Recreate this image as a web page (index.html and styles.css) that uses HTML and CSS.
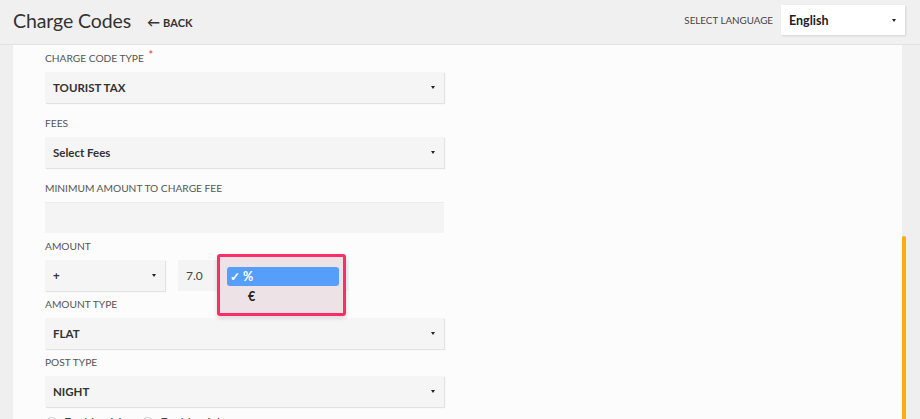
FILE: index.html
```html
<!DOCTYPE html>
<html>
<head>
<meta charset="utf-8">
<link rel="stylesheet" href="styles.css">
</head>
<body>
<div class="page">
  <header class="topbar">
    <div class="title-group">
      <h1 class="title">Charge Codes</h1>
      <a class="back"><span class="back-arrow">&#8592;</span> BACK</a>
    </div>
    <div class="lang">
      <span class="lang-label">SELECT LANGUAGE</span>
      <div class="lang-select"><span>English</span><i class="caret"></i></div>
    </div>
  </header>
  <div class="body">
    <div class="gutter"></div>
    <main class="card">
      <div class="group g-wide">
        <div class="label">CHARGE CODE TYPE <span class="req">*</span></div>
        <div class="select"><span>TOURIST TAX</span><i class="caret"></i></div>
      </div>
      <div class="group g-wide">
        <div class="label">FEES</div>
        <div class="select"><span>Select Fees</span><i class="caret"></i></div>
      </div>
      <div class="group">
        <div class="label">MINIMUM AMOUNT TO CHARGE FEE</div>
        <div class="input"></div>
      </div>
      <div class="group">
        <div class="label">AMOUNT</div>
        <div class="amount-row">
          <div class="select sign"><span>+</span><i class="caret"></i></div>
          <div class="input value"><span>7.0</span></div>
          <div class="popup">
            <div class="popup-inner">
              <div class="opt active"><span class="check">&#10003;</span> %</div>
              <div class="opt">&#8364;</div>
            </div>
          </div>
        </div>
      </div>
      <div class="group">
        <div class="label">AMOUNT TYPE</div>
        <div class="select"><span>FLAT</span><i class="caret"></i></div>
      </div>
      <div class="group">
        <div class="label">POST TYPE</div>
        <div class="select"><span>NIGHT</span><i class="caret"></i></div>
      </div>
      <div class="radios">
        <label class="radio"><i class="circle"></i><span>Enable visits</span></label>
        <label class="radio"><i class="circle"></i><span>Enable nights</span></label>
      </div>
    </main>
    <div class="rail"><div class="thumb"></div></div>
  </div>
</div>
</body>
</html>
```

FILE: styles.css
```css
* { box-sizing: border-box; }
html, body { margin: 0; padding: 0; }
body {
  width: 920px;
  height: 419px;
  overflow: hidden;
  background: #efefef;
  font-family: Lato, "Open Sans", sans-serif;
  color: #333;
}
.page { display: flex; flex-direction: column; height: 419px; }
.topbar {
  height: 45px;
  flex: none;
  display: flex;
  align-items: center;
  justify-content: space-between;
  padding: 0 15px 0 13px;
  background: #f0f0f0;
  border-bottom: 1px solid #e2e2e2;
}
.title-group { display: flex; align-items: center; gap: 16px; margin-top: -3px; }
.title { margin: 0; font-size: 19.5px; font-weight: 400; color: #333; letter-spacing: -0.1px; }
.back { font-size: 11px; font-weight: 700; color: #333; display: flex; align-items: center; gap: 3px; margin-top: 3px; }
.back-arrow { font-size: 13px; font-weight: 700; }
.lang { display: flex; align-items: center; gap: 8px; margin-top: -4px; }
.lang-label { font-size: 9.8px; color: #444; }
.lang-select {
  width: 124px; height: 30px;
  background: #fff;
  box-shadow: 1px 1px 2px rgba(0,0,0,0.12);
  display: flex; align-items: center; justify-content: space-between;
  padding: 0 8px 0 8px;
  font-size: 12.5px; font-weight: 700; color: #222;
}
.body { flex: 1; display: flex; min-height: 0; }
.gutter { width: 13px; flex: none; }
.card {
  width: 889px;
  flex: none;
  background: #fcfcfc;
  padding: 6px 0 0 32px;
  display: flex;
  flex-direction: column;
  overflow: hidden;
}
.rail { flex: 1; position: relative; }
.thumb { position: absolute; left: 0; top: 191px; width: 4px; bottom: 0; background: #fdab0d; border-radius: 2px 2px 0 0; }
.group { display: flex; flex-direction: column; width: 399px; margin-bottom: 6px; flex: none; }
.group.g-wide { margin-bottom: 13px; }
.label { font-size: 10.2px; height: 14px; line-height: 14px; color: #555; margin-bottom: 7px; }
.req { color: #e33; font-size: 11px; vertical-align: top; position: relative; top: -3px; margin-left: 2px; line-height: 14px; }
.select, .input {
  height: 31px;
  flex: none;
  background: #f5f5f5;
  box-shadow: 1px 1px 1px rgba(0,0,0,0.1);
  display: flex; align-items: center; justify-content: space-between;
  padding: 0 8px;
  font-size: 11.5px; font-weight: 700; color: #333;
}
.input { box-shadow: none; background: #f4f4f4; border-top: 1px solid #ececec; }
.caret { width: 0; height: 0; border-left: 2.5px solid transparent; border-right: 2.5px solid transparent; border-top: 3.5px solid #222; margin-right: 1px; }
.amount-row { display: flex; gap: 13px; position: relative; height: 31px; }
.sign { width: 120px; }
.value { width: 171px; font-weight: 400; color: #444; box-shadow: none; border-top: none; justify-content: flex-start; font-size: 12px; }
.popup {
  position: absolute;
  left: 172px; top: -6px;
  width: 129px; height: 62px;
  border: 3px solid #fd2d6c;
  border-radius: 3px;
  box-shadow: 0 2px 4px rgba(0,0,0,0.15);
  background: #ede3e6;
}
.popup-inner { padding: 10px 4px 0 7px; }
.opt { height: 19px; display: flex; align-items: center; padding-left: 21px; font-size: 12.5px; font-weight: 700; color: #222; margin-bottom: 1px; }
.opt.active { background: #559ffb; color: #fff; border-radius: 3px; padding-left: 3px; }
.check { font-size: 12px; margin-right: 3px; }
.radios { display: flex; gap: 10px; margin-top: 3px; font-size: 12.5px; color: #444; }
.radio { display: flex; align-items: center; gap: 6px; }
.circle { width: 13px; height: 13px; border: 1px solid #ccc; border-radius: 50%; background: #fafafa; }
```
